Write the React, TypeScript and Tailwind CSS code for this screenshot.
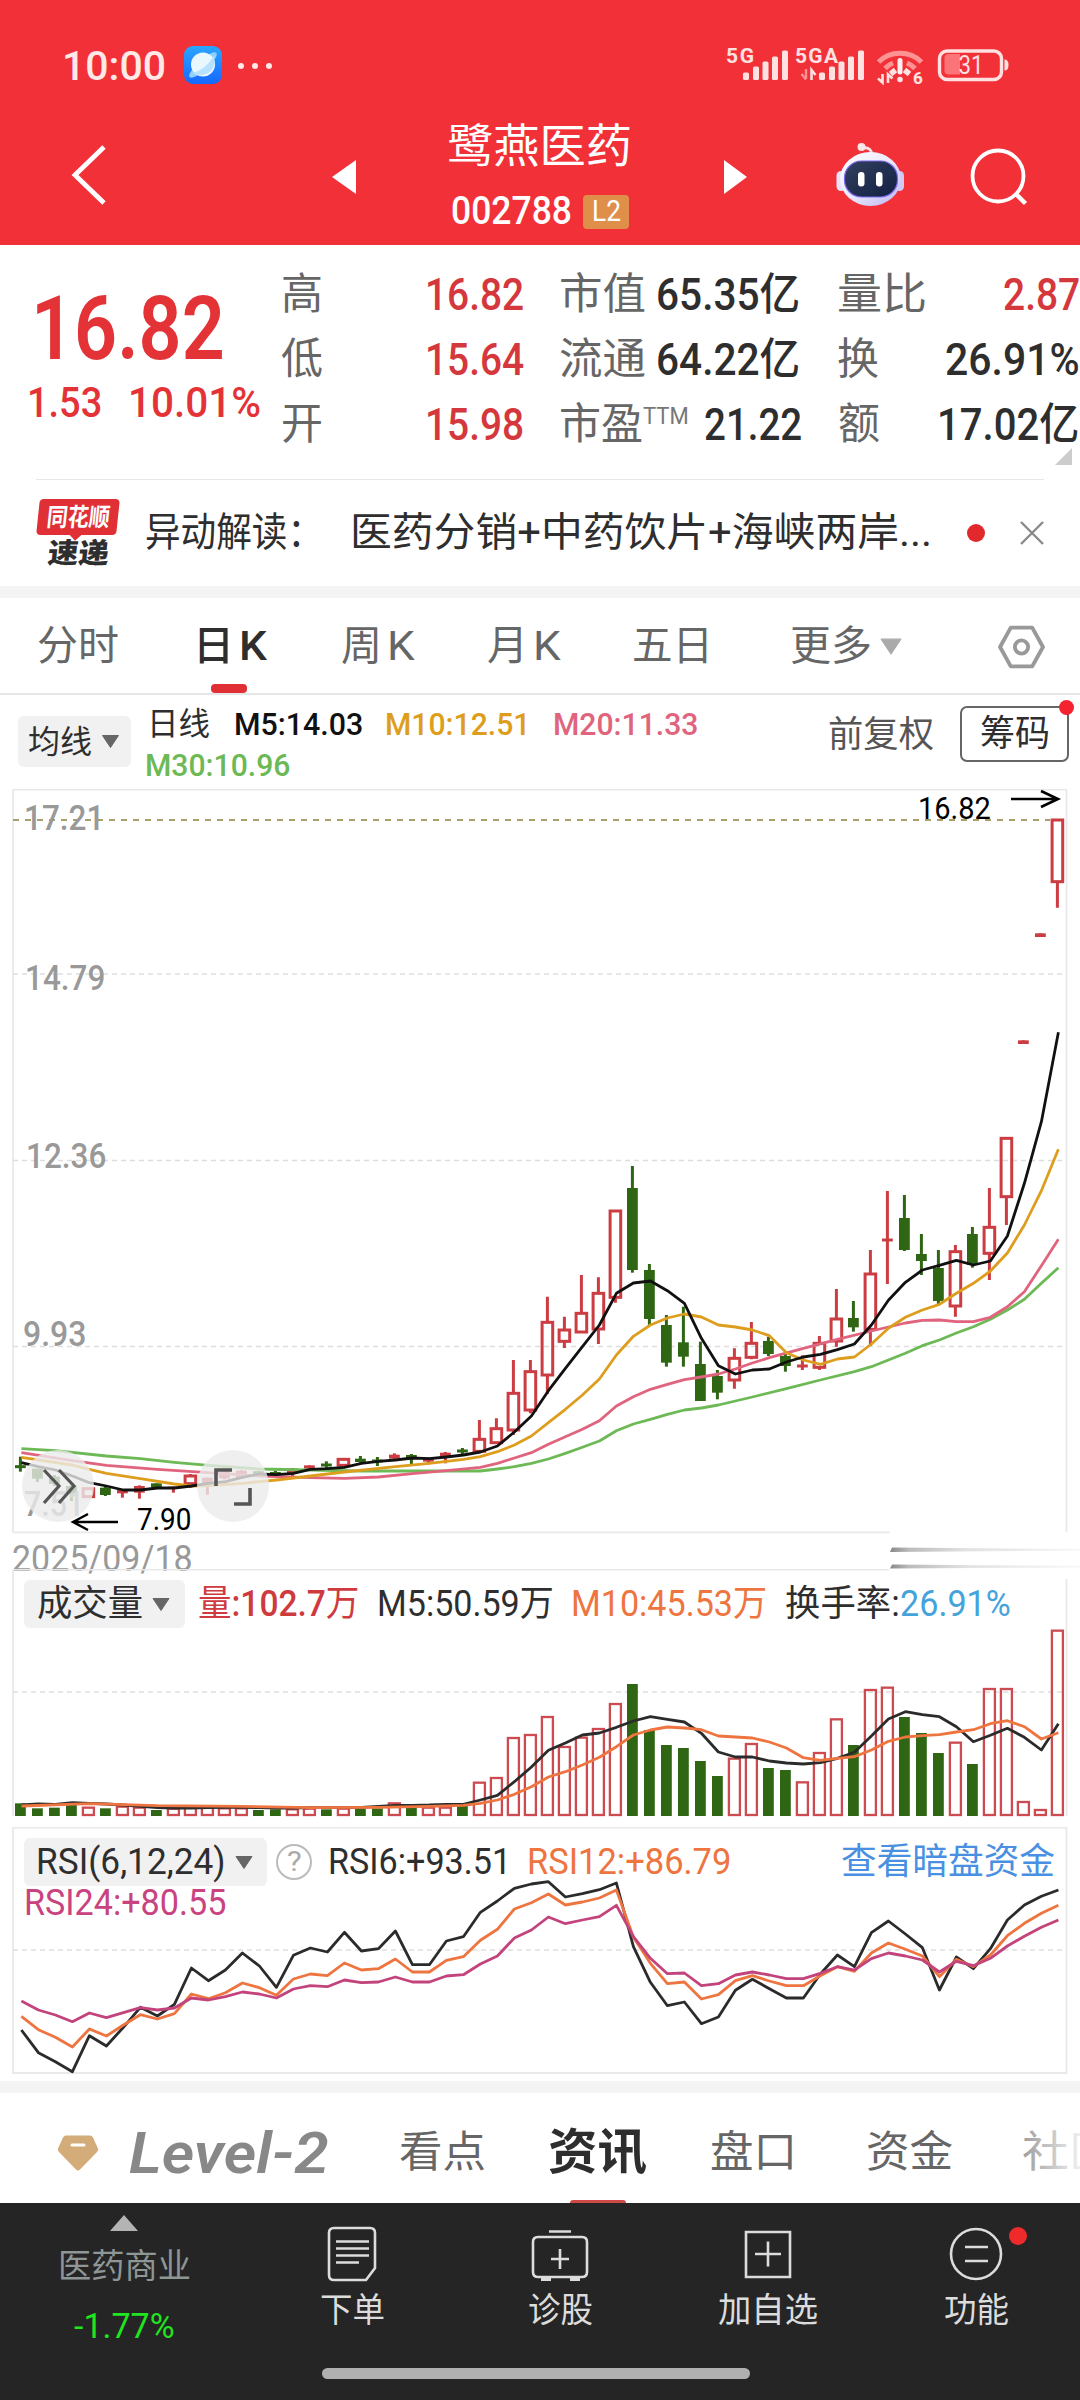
import { useLayoutEffect, useRef, useState, type ReactNode } from "react";

/** One line of text, condensed or widened to take exactly `w` pixels. */
function T({ w, className = "", children }: { w: number; className?: string; children: ReactNode }) {
  const ref = useRef<HTMLSpanElement>(null);
  const [k, setK] = useState(1);
  useLayoutEffect(() => {
    if (ref.current && ref.current.offsetWidth) setK(w / ref.current.offsetWidth);
  }, [w]);
  return (
    <span className={`block shrink-0 leading-none ${className}`} style={{ width: w }}>
      <span ref={ref} className="inline-block origin-left whitespace-nowrap" style={{ transform: `scaleX(${k})` }}>
        {children}
      </span>
    </span>
  );
}

const Caret = ({ className }: { className: string }) => (
  <svg viewBox="0 0 18 13" className={`shrink-0 ${className}`}>
    <path d="M1 0.5h16L9 12.5z" fill="currentColor" stroke="currentColor" strokeLinejoin="round" />
  </svg>
);

/* ---------- chart data: x is the session index, y the plotted height ---------- */

const X0 = 20.4;
const STEP = 17.0;
const xOf = (i: number) => X0 + STEP * i;
const RED = "#cb3d42";
const GREEN = "#2f6614";

type Pt = [number, number];
const seq = (a: number[]): Pt[] => a.map((v, i) => [i, v]);

// [kind, body top, body bottom, high, low]; r = hollow, f = filled red, g = green, d/e = red/green cross
type Candle = [string, number, number, number, number];
const candles: Candle[] = [
  ["e", 1040, 1040, 1010, 1055], ["g", 1046, 1076, 1046, 1086], ["g", 1070, 1092, 1065, 1098], ["g", 1098, 1122, 1095, 1143],
  ["r", 1106, 1130, 1106, 1130], ["g", 1103, 1125, 1100, 1128], ["f", 1110, 1120, 1108, 1133], ["f", 1098, 1118, 1096, 1136],
  ["g", 1090, 1103, 1090, 1103], ["f", 1100, 1107, 1100, 1118], ["r", 1068, 1091, 1062, 1104], ["f", 1073, 1090, 1073, 1124],
  ["f", 1056, 1075, 1052, 1078], ["f", 1052, 1074, 1050, 1076], ["e", 1058, 1058, 1052, 1064], ["g", 1056, 1064, 1052, 1066],
  ["f", 1046, 1060, 1044, 1068], ["f", 1036, 1046, 1036, 1050], ["e", 1035, 1035, 1024, 1046], ["r", 1018, 1036, 1016, 1040],
  ["g", 1016, 1026, 1008, 1028], ["e", 1023, 1023, 1011, 1038], ["f", 1004, 1016, 1000, 1020], ["g", 1005, 1014, 1002, 1034],
  ["f", 1014, 1025, 1012, 1033], ["f", 998, 1012, 996, 1030], ["e", 993, 993, 984, 1002], ["r", 958, 994, 900, 1000],
  ["r", 926, 968, 895, 970], ["r", 820, 930, 720, 945], ["r", 755, 870, 720, 880], ["r", 607, 765, 530, 822],
  ["r", 630, 664, 590, 684], ["r", 580, 636, 465, 638], ["r", 520, 627, 472, 672], ["r", 273, 532, 270, 548],
  ["g", 204, 450, 138, 458], ["g", 450, 597, 432, 615], ["g", 615, 728, 585, 740], ["g", 667, 710, 560, 740],
  ["g", 732, 843, 665, 843], ["g", 768, 818, 750, 838], ["r", 715, 780, 685, 806], ["r", 670, 712, 606, 718],
  ["g", 663, 702, 650, 708], ["g", 708, 738, 700, 755], ["d", 738, 738, 706, 750], ["r", 670, 742, 648, 750],
  ["r", 597, 663, 507, 680], ["g", 594, 622, 543, 635], ["r", 462, 628, 390, 678], ["d", 360, 360, 213, 492],
  ["g", 294, 390, 225, 393], ["g", 402, 423, 342, 465], ["g", 444, 543, 390, 552], ["r", 395, 558, 375, 590],
  ["g", 342, 435, 321, 443], ["r", 322, 400, 204, 480], ["r", 55, 230, 52, 315], ["f", -239, -228, -239, -228],
  ["f", -560, -549, -560, -549], ["r", -900, -715, -903, -637],
];

const ma5 = seq([
  1028, 1040, 1050, 1068, 1088, 1098, 1110, 1110, 1104, 1104, 1098, 1090, 1085, 1072, 1062, 1064, 1060, 1048, 1046, 1042, 1030,
  1024, 1020, 1014, 1016, 1011, 1005, 996, 978, 936, 888, 812, 745, 680, 615, 520, 489, 483, 512, 550, 655, 737, 762, 750, 747,
  726, 711, 703, 689, 672, 615, 541, 487, 450, 436, 421, 435, 423, 348, 190, 5, -263,
]);
const ma10: Pt[] = [
  [0, 1012], [3, 1035], [4, 1048], [5, 1060], [7, 1076], [9, 1092], [10, 1098], [11, 1097], [13, 1090], [15, 1080], [17, 1068],
  [19, 1056], [22, 1040], [24, 1030], [26, 1018], [27, 1010], [28, 995], [29, 975], [30, 948], [31, 908], [32, 868], [33, 825],
  [34, 777], [35, 705], [36, 649], [37, 615], [38, 594], [39, 582], [40, 591], [41, 615], [42, 621], [43, 630], [44, 647],
  [45, 698], [46, 720], [47, 733], [48, 717], [49, 711], [50, 672], [51, 625], [52, 592], [53, 570], [54, 553], [55, 520],
  [56, 490], [57, 453], [58, 399], [59, 315], [60, 212], [61, 88],
];
const ma20: Pt[] = [
  [0, 998], [3, 1022], [5, 1036], [8, 1048], [11, 1058], [14, 1068], [17, 1073], [19, 1075], [21, 1071], [23, 1061], [25, 1052],
  [27, 1042], [28, 1030], [29, 1014], [30, 998], [31, 973], [32, 950], [33, 928], [34, 902], [35, 858], [36, 830], [37, 808],
  [38, 793], [39, 779], [40, 771], [41, 762], [42, 747], [43, 729], [44, 713], [46, 685], [48, 658], [50, 633], [52, 609],
  [53, 601], [54, 600], [55, 605], [56, 605], [57, 592], [58, 560], [59, 515], [60, 437], [61, 358],
];
const ma30: Pt[] = [
  [0, 986], [2, 992], [5, 1008], [7, 1016], [9, 1027], [11, 1036], [14, 1047], [17, 1050], [20, 1053], [27, 1053], [28, 1047],
  [29, 1040], [30, 1030], [31, 1017], [32, 1000], [33, 982], [34, 963], [35, 932], [36, 912], [37, 898], [38, 883], [39, 870],
  [40, 864], [41, 855], [43, 831], [45, 806], [47, 780], [49, 755], [50, 740], [51, 720], [52, 700], [53, 677], [54, 660],
  [55, 639], [56, 620], [57, 598], [58, 570], [59, 538], [60, 490], [61, 443],
];

const volTop = [
  790, 805, 803, 795, 803, 805, 800, 803, 810, 806, 803, 803, 805, 805, 810, 808, 808, 806, 808, 806, 807, 805, 790, 803, 803, 803,
  798, 728, 714, 594, 585, 531, 621, 593, 567, 492, 432, 570, 615, 624, 663, 708, 656, 612, 684, 690, 727, 639, 538, 615, 450, 443,
  531, 579, 639, 608, 672, 447, 447, 786, 810, 272,
];
const vol5 = seq([
  795, 792, 793, 788, 790, 792, 795, 799, 803, 804, 804, 803, 802, 802, 803, 804, 804, 803, 803, 803, 802, 799, 796, 796, 795, 793,
  793, 780, 766, 725, 681, 631, 609, 585, 579, 562, 543, 530, 538, 546, 580, 636, 651, 651, 663, 669, 672, 668, 655, 637, 588, 537,
  515, 524, 530, 560, 605, 586, 565, 592, 630, 551,
]);
const vol10: Pt[] = [
  [0, 798], [4, 791], [8, 797], [13, 799], [17, 803], [21, 802], [24, 799], [26, 796], [27, 790], [28, 780], [29, 763], [30, 740],
  [31, 711], [32, 695], [33, 675], [34, 652], [35, 620], [36, 585], [37, 570], [38, 561], [39, 564], [40, 569], [41, 588], [42, 591],
  [43, 594], [44, 606], [45, 624], [46, 653], [47, 661], [48, 655], [49, 650], [50, 630], [51, 604], [52, 591], [53, 587], [54, 584],
  [55, 576], [56, 569], [57, 551], [58, 542], [59, 560], [60, 597], [61, 578],
];

const rsi6 = seq([
  630, 698, 725, 755, 647, 678, 622, 562, 588, 553, 444, 482, 450, 399, 438, 502, 406, 384, 396, 337, 393, 386, 333, 434, 434, 363,
  350, 277, 243, 205, 192, 185, 231, 221, 209, 189, 380, 487, 557, 546, 611, 591, 511, 478, 506, 534, 534, 462, 405, 440, 338, 303,
  342, 383, 510, 411, 446, 386, 300, 255, 229, 210,
]);
const rsi12 = seq([
  589, 629, 652, 681, 627, 648, 615, 584, 597, 581, 522, 536, 518, 489, 503, 526, 477, 462, 467, 429, 450, 446, 417, 456, 456, 421,
  410, 361, 328, 267, 248, 222, 255, 246, 234, 210, 352, 430, 491, 486, 537, 524, 482, 467, 483, 497, 497, 467, 440, 454, 399, 369,
  388, 408, 470, 418, 440, 405, 347, 310, 280, 256,
]);
const rsi24 = seq([
  543, 570, 585, 605, 579, 593, 578, 563, 570, 564, 534, 540, 530, 516, 522, 534, 507, 497, 500, 480, 488, 486, 471, 486, 486, 468,
  464, 432, 408, 354, 330, 291, 311, 300, 290, 256, 350, 415, 461, 459, 497, 491, 465, 456, 465, 476, 476, 460, 440, 450, 416, 399,
  408, 420, 456, 424, 437, 415, 378, 349, 322, 300,
]);

const path = (pts: Pt[], base: number) =>
  pts.map(([i, v], n) => `${n ? "L" : "M"}${xOf(i + 0.06).toFixed(1)} ${(base + v / 3).toFixed(1)}`).join("");

const Line = ({ pts, base, color }: { pts: Pt[]; base: number; color: string }) => (
  <path d={path(pts, base)} fill="none" stroke={color} strokeWidth="2.8" strokeLinejoin="round" />
);

const Grid = ({ y }: { y: number }) => (
  <path d={`M13 ${y}H1066`} stroke="#dedede" strokeWidth="1.3" strokeDasharray="5 4" />
);

function PriceChart() {
  const base = 331;
  const y = (v: number) => base + v / 3;
  return (
    <svg viewBox="0 0 1080 780" className="block h-[780px] w-[1080px]" fill="none">
      <path d="M13 743.3V0.7H1066.5V743.3" stroke="#e9e9e9" strokeWidth="1.8" />
      <path d="M13 743.3H890" stroke="#e9e9e9" strokeWidth="1.8" />
      <Grid y={185} />
      <Grid y={371.5} />
      <Grid y={557.5} />
      <path d="M13 31H1050" stroke="#a99f6b" strokeWidth="1.8" strokeDasharray="6 6" />
      {candles.map(([k, t, b, h, l], i) => {
        const x = xOf(i);
        const c = k === "g" || k === "e" ? GREEN : RED;
        const cross = k === "d" || k === "e";
        return (
          <g key={i} stroke={c}>
            {k === "r" ? (
              <>
                <path d={`M${x} ${y(h)}V${y(t)}M${x} ${y(b)}V${y(l)}`} strokeWidth="3" />
                <rect x={x - 5.3} y={y(t)} width="10.6" height={y(b) - y(t)} strokeWidth="3" />
              </>
            ) : (
              <>
                <path d={`M${x} ${y(h)}V${y(l)}`} strokeWidth="3" />
                {cross ? (
                  <path d={`M${x - 5.4} ${y(t)}H${x + 5.4}`} strokeWidth="3" />
                ) : (
                  <rect x={x - 5.4} y={y(t)} width="10.8" height={y(b) - y(t)} fill={c} stroke="none" />
                )}
              </>
            )}
          </g>
        );
      })}
      <Line pts={ma30} base={base} color="#6cb955" />
      <Line pts={ma20} base={base} color="#e0647e" />
      <Line pts={ma10} base={base} color="#dd9e1e" />
      <Line pts={ma5} base={base} color="#111111" />
      <path d="M1011 10h45M1041 2l17 8-17 8" stroke="#000" strokeWidth="2.6" />
      <path d="M118 733H73M88 725l-15 8 15 8" stroke="#000" strokeWidth="2.4" />
      {/* torn edge of the date strip */}
      <defs>
        <linearGradient id="streak" x1="0" x2="1" y1="0" y2="0">
          <stop offset="0" stopColor="#888" />
          <stop offset="0.1" stopColor="#bbb" />
          <stop offset="0.4" stopColor="#e2e2e2" />
          <stop offset="1" stopColor="#f6f6f6" />
        </linearGradient>
      </defs>
      <path d="M892 758.5l188 1.500v1.500l-190 1.500zM892 775.5l188 1.500v1.500l-190 1z" fill="url(#streak)" />
    </svg>
  );
}

function VolumeChart() {
  const base = -29;
  return (
    <svg viewBox="0 0 1080 249" className="block h-[249px] w-[1080px]" fill="none">
      <path d="M13 247V0.5H889M1066.5 10V247" stroke="#e9e9e9" strokeWidth="1.8" />
      <Grid y={123} />
      {volTop.map((v, i) => {
        const k = candles[i][0];
        const x = xOf(i);
        const t = base + v / 3;
        return k === "g" || k === "e" ? (
          <rect key={i} x={x - 5.4} y={t} width="10.8" height={247 - t} fill={GREEN} />
        ) : (
          <rect key={i} x={x - 5.5} y={t} width="11" height={246 - t} stroke="#cc4a50" strokeWidth="2.3" />
        );
      })}
      <Line pts={vol5} base={base} color="#2b2b2b" />
      <Line pts={vol10} base={base} color="#ee7440" />
    </svg>
  );
}

function RsiChart() {
  const base = -7;
  return (
    <svg viewBox="0 0 1080 248" className="block h-[248px] w-[1080px]" fill="none">
      <path d="M13 0.7H1066.5V246H13z" stroke="#e9e9e9" strokeWidth="1.8" />
      <Grid y={123} />
      <Line pts={rsi6} base={base} color="#2b2b2b" />
      <Line pts={rsi12} base={base} color="#ee7440" />
      <Line pts={rsi24} base={base} color="#c3437c" />
    </svg>
  );
}

/* ---------- header ---------- */

function StatusIcons() {
  const bar = (x: number, y: number) => <rect key={x} x={x} y={y} width="6" height={80 - y} rx="1.6" />;
  return (
    <svg viewBox="720 40 300 50" className="h-[50px] w-[300px] shrink-0" fill="#ffe1e1">
      {bar(743, 72.5)}
      {bar(753, 66.5)}
      {bar(762.5, 61.5)}
      {bar(772, 56.5)}
      {bar(782, 50.5)}
      {bar(819, 72.5)}
      {bar(829, 66.5)}
      {bar(838.5, 61.5)}
      {bar(848, 56.5)}
      {bar(858, 50.5)}
      <path d="M806 69v10M801.500 74l4.500 5.500" stroke="#ff8f90" strokeWidth="2.400" />
      <path d="M811.500 80V70l4 5" stroke="#ffe1e1" strokeWidth="2.600" fill="none" />
      <g fill="none">
        <path d="M878.500 62a31 31 0 0 1 43 0" stroke="#ff9394" strokeWidth="5" />
        <path d="M885 68.500a21 21 0 0 1 8-5.500M907 63a21 21 0 0 1 8 5.500" stroke="#ff9394" strokeWidth="5" />
        <path d="M890.500 74l5-4M904.500 70l5 4" stroke="#ffe1e1" strokeWidth="5.500" />
        <path d="M900 60.500v11.500" stroke="#fff0f0" strokeWidth="5" strokeLinecap="round" />
        <path d="M882.500 74v8.500l-4.500-4M888 83v-8.500l4.500 4" stroke="#ffe1e1" strokeWidth="2.600" />
      </g>
      <circle cx="900" cy="79.500" r="2.800" />
      <rect x="939.500" y="51" width="62" height="28.500" rx="7.500" fill="none" stroke="#ffe1e1" strokeWidth="3.400" />
      <path d="M948.500 54H960v20.500h-11.500a4 4 0 0 1-4-4V58a4 4 0 0 1 4-4z" fill="#fb7477" />
      <path d="M1004.500 59.500q4 0 4 5.500t-4 5.500z" />
      <g fontFamily="Roboto, sans-serif">
        <text x="726" y="62.500" fontSize="21" fontWeight="700" textLength="28">5G</text>
        <text x="795" y="62.500" fontSize="21" fontWeight="700" textLength="43">5GA</text>
        <text x="913" y="83.500" fontSize="17" fontWeight="800">6</text>
        <text x="958.500" y="74" fontSize="25" textLength="25" lengthAdjust="spacingAndGlyphs">31</text>
      </g>
    </svg>
  );
}

const Robot = () => (
  <svg viewBox="0 0 70 66" className="h-[66px] w-[70px]">
    <defs>
      <linearGradient id="head" x1="0" x2="1" y1="0" y2="1">
        <stop offset="0" stopColor="#ffffff" />
        <stop offset="0.5" stopColor="#ece8fb" />
        <stop offset="1" stopColor="#b9b4f4" />
      </linearGradient>
      <linearGradient id="face" x1="0" x2="1" y1="0" y2="1">
        <stop offset="0" stopColor="#33415f" />
        <stop offset="1" stopColor="#121f42" />
      </linearGradient>
    </defs>
    <path d="M27 6q10-2 10 9" fill="none" stroke="#f7dfe8" strokeWidth="3" />
    <circle cx="26.500" cy="5" r="4" fill="#fbe6ea" />
    <rect x="1.500" y="29" width="9" height="20" rx="4.500" fill="#e7e2f8" />
    <rect x="60" y="29" width="9" height="20" rx="4.500" fill="#cfc9f6" />
    <ellipse cx="35.500" cy="37" rx="30.500" ry="27" fill="url(#head)" />
    <rect x="9.500" y="19" width="53" height="36" rx="17" fill="url(#face)" stroke="#7b68ee" strokeWidth="1.200" />
    <rect x="23" y="30" width="6.500" height="14.500" rx="3.200" fill="#fff" />
    <rect x="41" y="30" width="6.500" height="14.500" rx="3.200" fill="#fff" />
  </svg>
);

function Header() {
  return (
    <header className="flex h-[245px] shrink-0 flex-col bg-[#f23038] text-white">
      <div className="mt-[40px] flex h-[50px] items-center text-[#ffe8e8]">
        <T w={104} className="mt-[2px] ml-[62px] text-[41px] font-medium">10:00</T>
        <svg viewBox="0 0 38 38" className="ml-[18px] h-[38px] w-[38px] shrink-0">
          <defs>
            <linearGradient id="app" x1="0" x2="0" y1="0" y2="1">
              <stop offset="0" stopColor="#2aa6ff" />
              <stop offset="1" stopColor="#1668ff" />
            </linearGradient>
          </defs>
          <rect width="38" height="38" rx="9" fill="url(#app)" />
          <ellipse cx="19" cy="19" rx="18" ry="5" transform="rotate(-42 19 19)" fill="#8fd0ff" />
          <circle cx="19" cy="18.500" r="12" fill="#e9f7ff" />
          <path d="M8 27q12-2 22-17 2 10-4 16-8 6-18 1z" fill="#b7e2ff" />
        </svg>
        <div className="ml-[16px] flex gap-[8px] pt-[1px]">
          <i className="size-[6px] rounded-full bg-[#ffe8e8]" />
          <i className="size-[6px] rounded-full bg-[#ffe8e8]" />
          <i className="size-[6px] rounded-full bg-[#ffe8e8]" />
        </div>
        <div className="ml-[448px]">
          <StatusIcons />
        </div>
      </div>
      <div className="flex h-[155px]">
        <svg viewBox="0 0 36 60" className="mt-[55px] ml-[71px] h-[60px] w-[36px] shrink-0" fill="none">
          <path d="M33 2L4 30l29 28" stroke="#fff" strokeWidth="4.800" />
        </svg>
        <svg viewBox="0 0 24 34" className="mt-[70px] ml-[225px] h-[34px] w-[24px] shrink-0">
          <path d="M24 0v34L0 17z" fill="#fff" />
        </svg>
        <div className="ml-[88px] flex w-[192px] shrink-0 flex-col items-start pt-[33px]">
          <T w={185} className="ml-[3px] text-[46px]">鹭燕医药</T>
          <div className="mt-[23px] flex items-center">
            <T w={121} className="ml-[7px] text-[39px] font-medium">002788</T>
            <span className="ml-[11px] flex h-[34px] w-[46px] shrink-0 items-center justify-center rounded-[4px] bg-[#e08f4b]">
              <T w={29} className="text-[29px]">L2</T>
            </span>
          </div>
        </div>
        <svg viewBox="0 0 24 34" className="mt-[70px] ml-[88px] h-[34px] w-[24px] shrink-0">
          <path d="M0 0v34L23 17z" fill="#fff" />
        </svg>
        <div className="mt-[52px] ml-[87px] shrink-0">
          <Robot />
        </div>
        <svg viewBox="0 0 58 58" className="mt-[58px] ml-[65px] h-[58px] w-[58px] shrink-0" fill="none" stroke="#fff" strokeWidth="3.800">
          <circle cx="28" cy="28" r="25.500" />
          <path d="M45 45l10.500 10.500" strokeWidth="4.500" />
        </svg>
      </div>
    </header>
  );
}

function Quote() {
  const lab = "text-[43px] text-[#666]";
  const red = "text-[44px] font-medium text-[#d5383c]";
  const blk = "text-[44px] font-medium text-[#2e2e2e]";
  return (
    <section className="relative flex h-[234px] shrink-0">
      <div className="w-[279px] shrink-0 pt-[39px] text-[#e43337]">
        <T w={194} className="ml-[31px] text-[89px] font-semibold">16.82</T>
        <div className="mt-[9px] flex text-[42px] font-medium">
          <T w={75} className="ml-[27px]">1.53</T>
          <T w={133} className="ml-[26px]">10.01%</T>
        </div>
      </div>
      <div className="flex flex-col gap-[21px] pt-[28px]">
        <div className="flex">
          <T w={42} className={`ml-[2px] ${lab}`}>高</T>
          <T w={99} className={`ml-[102px] ${red}`}>16.82</T>
          <T w={87} className={`ml-[35px] ${lab}`}>市值</T>
          <T w={144} className={`ml-[10px] ${blk}`}>65.35亿</T>
          <T w={90} className={`ml-[37px] ${lab}`}>量比</T>
          <T w={77} className={`ml-[76px] ${red}`}>2.87</T>
        </div>
        <div className="flex">
          <T w={42} className={`ml-[2px] ${lab}`}>低</T>
          <T w={99} className={`ml-[102px] ${red}`}>15.64</T>
          <T w={87} className={`ml-[35px] ${lab}`}>流通</T>
          <T w={144} className={`ml-[10px] ${blk}`}>64.22亿</T>
          <T w={42} className={`ml-[37px] ${lab}`}>换</T>
          <T w={135} className={`ml-[66px] ${blk}`}>26.91%</T>
        </div>
        <div className="flex">
          <T w={42} className={`ml-[2px] ${lab}`}>开</T>
          <T w={99} className={`ml-[102px] ${red}`}>15.98</T>
          <T w={84} className={`ml-[35px] ${lab}`}>市盈</T>
          <T w={46} className="mt-[2px] text-[23px] text-[#777]">TTM</T>
          <T w={98} className={`ml-[15px] ${blk}`}>21.22</T>
          <T w={42} className={`ml-[36px] ${lab}`}>额</T>
          <T w={142} className={`ml-[57px] ${blk}`}>17.02亿</T>
        </div>
      </div>
      <svg viewBox="0 0 17 17" className="absolute top-[203px] left-[1055px] h-[17px] w-[17px]">
        <path d="M17 0v17H0z" fill="#ccc" />
      </svg>
    </section>
  );
}

function News() {
  return (
    <section className="flex h-[106px] shrink-0 items-center">
      <div className="ml-[36px] flex w-[84px] shrink-0 flex-col items-center">
        <div className="relative flex h-[36px] w-[80px] -skew-x-6 items-center justify-center rounded-[4px] bg-[#e03035] text-white">
          <T w={63} className="text-[25px] font-bold">同花顺</T>
          <i className="absolute -bottom-[4px] left-[35px] size-[9px] rotate-45 bg-[#e03035]" />
        </div>
        <T w={61} className="mt-[5px] -skew-x-6 text-[28px] font-black text-[#2e2e2e]">速递</T>
      </div>
      <T w={178} className="ml-[25px] text-[40px] text-[#2e2e2e]">异动解读：</T>
      <T w={582} className="ml-[27px] text-[40px] text-[#2e2e2e]">医药分销+中药饮片+海峡两岸...</T>
      <i className="ml-[35px] size-[18px] shrink-0 rounded-full bg-[#e0282d]" />
      <svg viewBox="0 0 24 24" className="ml-[35px] h-[24px] w-[24px] shrink-0" stroke="#8a8a8a" strokeWidth="2.400">
        <path d="M1 1l22 22M23 1L1 23" />
      </svg>
    </section>
  );
}

function Tabs() {
  const c = "text-[41px] text-[#666]";
  return (
    <nav className="relative flex h-[97px] shrink-0 items-center border-b-2 border-[#e6e6e6] pt-[2px]">
      <T w={82} className={`ml-[37px] ${c}`}>分时</T>
      <div className="ml-[74px] flex text-[41px] font-medium text-[#2e2e2e]">
        <T w={41}>日</T>
        <T w={28} className="ml-[5px]">K</T>
      </div>
      <div className={`ml-[74px] flex ${c}`}>
        <T w={41}>周</T>
        <T w={28} className="ml-[5px]">K</T>
      </div>
      <div className={`ml-[72px] flex ${c}`}>
        <T w={41}>月</T>
        <T w={28} className="ml-[5px]">K</T>
      </div>
      <T w={81} className={`ml-[71px] ${c}`}>五日</T>
      <T w={82} className={`ml-[77px] ${c}`}>更多</T>
      <Caret className="ml-[8px] h-[17px] w-[22px] text-[#aaa]" />
      <svg viewBox="0 0 46 42" className="ml-[96px] h-[44px] w-[47px] shrink-0" fill="none" stroke="#999" strokeWidth="3.800" strokeLinejoin="round">
        <path d="M12.500 2h21L44 21 33.500 40h-21L2 21z" />
        <circle cx="23" cy="21" r="6.500" />
      </svg>
      <i className="absolute bottom-0 left-[211px] h-[9px] w-[36px] rounded-[4px] bg-[#e03035]" />
    </nav>
  );
}

function Averages() {
  return (
    <section className="flex h-[94px] shrink-0 text-[32px]">
      <div className="mt-[21px] ml-[18px] flex h-[51px] w-[113px] shrink-0 items-center rounded-[6px] bg-[#f1f1f1] text-[#2e2e2e]">
        <T w={64} className="ml-[10px]">均线</T>
        <Caret className="ml-[9px] h-[13px] w-[19px] text-[#666]" />
      </div>
      <div className="ml-[14px] flex w-[560px] shrink-0 flex-col gap-[9px] pt-[13px] font-medium">
        <div className="flex">
          <T w={63} className="ml-[2px] font-normal text-[#2e2e2e]">日线</T>
          <T w={129} className="ml-[24px] text-[#111]">M5:14.03</T>
          <T w={145} className="ml-[22px] text-[#dd9e1e]">M10:12.51</T>
          <T w={145} className="ml-[23px] text-[#e0647e]">M20:11.33</T>
        </div>
        <T w={145} className="text-[#6cb955]">M30:10.96</T>
      </div>
      <T w={106} className="mt-[22px] ml-[123px] text-[36px] text-[#555]">前复权</T>
      <div className="relative mt-[11px] ml-[26px] flex h-[56px] w-[109px] shrink-0 items-center justify-center rounded-[7px] border-2 border-[#666]">
        <T w={70} className="text-[36px] text-[#2e2e2e]">筹码</T>
        <i className="absolute -top-[8px] -right-[7px] size-[15px] rounded-full bg-[#f5222f]" />
      </div>
    </section>
  );
}

function Price() {
  const p = "absolute text-[35px] text-[#999] font-medium";
  return (
    <section className="relative h-[780px] shrink-0">
      <T w={80} className={`${p} top-[12px] left-[24px]`}>17.21</T>
      <T w={80} className={`${p} top-[172px] left-[25px]`}>14.79</T>
      <T w={80} className={`${p} top-[350px] left-[26px]`}>12.36</T>
      <T w={63} className={`${p} top-[528px] left-[23px]`}>9.93</T>
      <T w={60} className={`${p} top-[698px] left-[24px]`}>7.51</T>
      <PriceChart />
      <T w={73} className="absolute top-[4px] left-[918px] text-[31px] text-black">16.82</T>
      <T w={54} className="absolute top-[715px] left-[137px] text-[31px] text-black">7.90</T>
      <T w={181} className="absolute top-[752px] left-[12px] text-[36px] text-[#999]">2025/09/18</T>
      <svg viewBox="0 0 72 72" className="absolute top-[661px] left-[22px] h-[72px] w-[72px]" fill="none" stroke="#555" strokeWidth="3.200">
        <circle cx="36" cy="36" r="36" fill="#ebebeb" fillOpacity="0.8" stroke="none" />
        <path d="M22 20l15 16-15 17M37 20l15 16-15 17" />
      </svg>
      <svg viewBox="0 0 72 72" className="absolute top-[661px] left-[197px] h-[72px] w-[72px]" fill="none" stroke="#555" strokeWidth="3.600">
        <circle cx="36" cy="36" r="36" fill="#ebebeb" fillOpacity="0.8" stroke="none" />
        <path d="M19 36V20h16M53 38v16H37" />
      </svg>
    </section>
  );
}

function Volume() {
  return (
    <section className="relative h-[258px] shrink-0 text-[36px]">
      <VolumeChart />
      <div className="absolute top-[11px] left-[24px] flex h-[48px] items-center">
        <div className="flex h-[48px] w-[161px] items-center rounded-[6px] bg-[#f1f1f1] text-[#2e2e2e]">
          <T w={106} className="ml-[13px]">成交量</T>
          <Caret className="ml-[9px] h-[13px] w-[18px] text-[#666]" />
        </div>
        <T w={161} className="ml-[13px] text-[#cf3a3e]">
          量<span className="font-medium">:102.7</span>万
        </T>
        <T w={177} className="ml-[18px] text-[#2e2e2e]">M5:50.59万</T>
        <T w={196} className="ml-[17px] text-[#ee7440]">M10:45.53万</T>
        <T w={115} className="ml-[18px] text-[#2e2e2e]">换手率:</T>
        <T w={111} className="text-[#45a3dc]">26.91%</T>
      </div>
    </section>
  );
}

function Rsi() {
  return (
    <section className="relative h-[254px] shrink-0 text-[36px]">
      <RsiChart />
      <div className="absolute top-[11px] left-[24px] flex h-[48px] items-center">
        <div className="flex h-[48px] w-[243px] items-center rounded-[6px] bg-[#f1f1f1] text-[#2e2e2e]">
          <T w={190} className="ml-[12px]">RSI(6,12,24)</T>
          <Caret className="ml-[9px] h-[13px] w-[18px] text-[#666]" />
        </div>
        <span className="ml-[9px] flex size-[36px] items-center justify-center rounded-full border-[2.5px] border-[#bbb] text-[#aaa]">
          <T w={15} className="text-[27px]">?</T>
        </span>
        <T w={183} className="ml-[16px] text-[#2e2e2e]">RSI6:+93.51</T>
        <T w={204} className="ml-[16px] text-[#ee7440]">RSI12:+86.79</T>
        <T w={214} className="ml-[110px] text-[#4a90e2]">查看暗盘资金</T>
      </div>
      <T w={202} className="absolute top-[58px] left-[24px] text-[#c8437f]">RSI24:+80.55</T>
    </section>
  );
}

function SubTabs() {
  const c = "text-[43px] text-[#666]";
  return (
    <nav className="relative flex h-[110px] shrink-0 items-center overflow-hidden pt-[9px]">
      <svg viewBox="0 0 42 36" className="ml-[57px] h-[37px] w-[42px] shrink-0">
        <path d="M9 1h24q2 0 3 2l5 11q.5 2-1 3.500L23 35q-2 2-4 0L2 17.500Q.5 16 1 14L6 3q1-2 3-2z" fill="#d3ac7a" />
        <path d="M15 10.500h12" stroke="#fff" strokeWidth="3" strokeLinecap="round" />
      </svg>
      <T w={200} className="ml-[30px] text-[58px] font-semibold text-[#888] italic">Level-2</T>
      <T w={87} className={`ml-[70px] ${c}`}>看点</T>
      <T w={99} className="ml-[62px] text-[49px] font-bold text-[#2e2e2e]">资讯</T>
      <T w={87} className={`ml-[63px] ${c}`}>盘口</T>
      <T w={87} className={`ml-[69px] ${c}`}>资金</T>
      <T w={94} className="ml-[69px] text-[43px] text-[#666]">社区</T>
      <i className="absolute top-0 right-0 h-[105px] w-[70px] bg-gradient-to-r from-white/25 to-white/90" />
      <i className="absolute bottom-0 left-[570px] h-[3px] w-[56px] rounded-t-[3px] bg-[#cf4a45]" />
    </nav>
  );
}

function BottomBar() {
  return (
    <footer className="flex h-[197px] shrink-0 flex-col items-center bg-[#252525] text-[34px] text-[#dcdcdc]">
      <div className="flex h-[165px] w-full">
        <div className="ml-[58px] flex w-[132px] flex-col items-center pt-[12px]">
          <svg viewBox="0 0 28 16" className="h-[16px] w-[28px]">
            <path d="M14 0l14 16H0z" fill="#b4b4b4" />
          </svg>
          <T w={133} className="mt-[18px] text-[#8f9696]">医药商业</T>
          <T w={101} className="mt-[26px] text-[35px] text-[#1fe61f]">-1.77%</T>
        </div>
        <div className="ml-[112px] flex w-[100px] flex-col items-center pt-[23px]">
          <svg viewBox="0 0 50 56" className="h-[56px] w-[50px]" fill="none" stroke="#dcdcdc" strokeWidth="2.600">
            <path d="M7 2h36q5 0 5 5v35l-9 12H7q-5 0-5-5V7q0-5 5-5z" />
            <path d="M9 15.500h33M9 22.500h33M9 29.500h33M9 36.500h23" />
          </svg>
          <T w={65} className="mt-[11px]">下单</T>
        </div>
        <div className="ml-[108px] flex w-[100px] flex-col items-center pt-[23px]">
          <svg viewBox="0 0 60 56" className="h-[56px] w-[60px]" fill="none" stroke="#dcdcdc" strokeWidth="2.600">
            <path d="M19 5.500h22M8 11h44q5 0 5 5v30q0 5-5 5H8q-5 0-5-5V16q0-5 5-5zM21 33h18M30 23v20" />
            <path d="M11 53h10M40 53h10" strokeWidth="4" />
          </svg>
          <T w={65} className="mt-[11px]">诊股</T>
        </div>
        <div className="ml-[107px] flex w-[102px] flex-col items-center pt-[23px]">
          <svg viewBox="0 0 50 56" className="h-[56px] w-[50px]" fill="none" stroke="#dcdcdc" strokeWidth="2.600">
            <path d="M3 6h44v45H3zM12 28h26M25 15.500v25" />
          </svg>
          <T w={100} className="mt-[11px]">加自选</T>
        </div>
        <div className="relative ml-[107px] flex w-[100px] flex-col items-center pt-[23px]">
          <svg viewBox="0 0 56 56" className="h-[56px] w-[56px]" fill="none" stroke="#dcdcdc" strokeWidth="2.600">
            <circle cx="28" cy="28" r="25" />
            <path d="M17 21h23M17 35h23" />
          </svg>
          <T w={65} className="mt-[11px]">功能</T>
          <i className="absolute top-[24px] left-[83px] size-[18px] rounded-full bg-[#ee2a2a]" />
        </div>
      </div>
      <i className="mr-[8px] h-[11px] w-[428px] rounded-full bg-[#b0b0b0]" />
    </footer>
  );
}

export default function App() {
  return (
    <main className="flex h-[2400px] w-[1080px] flex-col overflow-hidden bg-white [font-family:Roboto,'Noto_Sans_CJK_SC',sans-serif]">
      <Header />
      <Quote />
      <i className="mx-[36px] h-[1px] shrink-0 bg-[#e8e8e8]" />
      <News />
      <i className="h-[12px] shrink-0 bg-[#f4f4f4]" />
      <Tabs />
      <Averages />
      <Price />
      <Volume />
      <Rsi />
      <i className="h-[12px] shrink-0 bg-[#f4f4f4]" />
      <SubTabs />
      <BottomBar />
    </main>
  );
}
